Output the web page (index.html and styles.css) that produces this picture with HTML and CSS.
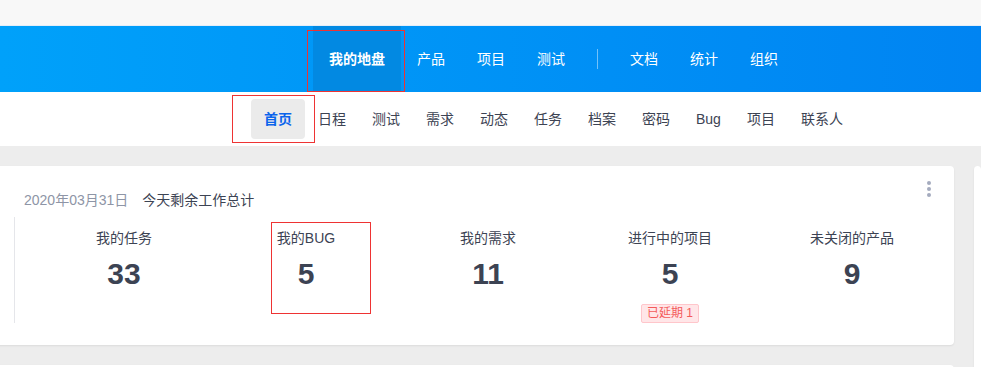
FILE: index.html
```html
<html><head>
<meta charset="UTF-8">
<meta name="viewport" content="width=device-width, initial-scale=1.0">
<title>我的地盘 - 首页</title>
<link rel="stylesheet" href="styles.css">
</head>
<body>
  <div class="topbar"></div>

  <nav class="mainnav">
    <a class="nav-item active marked" href="#">我的地盘</a>
    <a class="nav-item" href="#">产品</a>
    <a class="nav-item" href="#">项目</a>
    <a class="nav-item" href="#">测试</a>
    <span class="nav-divider"></span>
    <a class="nav-item" href="#">文档</a>
    <a class="nav-item" href="#">统计</a>
    <a class="nav-item" href="#">组织</a>
  </nav>

  <nav class="subnav">
    <a class="sub-item active marked" href="#">首页</a>
    <a class="sub-item" href="#">日程</a>
    <a class="sub-item" href="#">测试</a>
    <a class="sub-item" href="#">需求</a>
    <a class="sub-item" href="#">动态</a>
    <a class="sub-item" href="#">任务</a>
    <a class="sub-item" href="#">档案</a>
    <a class="sub-item" href="#">密码</a>
    <a class="sub-item" href="#">Bug</a>
    <a class="sub-item" href="#">项目</a>
    <a class="sub-item" href="#">联系人</a>
  </nav>

  <main class="dashboard">
    <div class="col-main">
      <div class="panel">
        <div class="panel-heading">
          <span class="panel-date">2020年03月31日</span>
          <span class="panel-title">今天剩余工作总计</span>
          <span class="panel-actions">
            <svg width="4" height="16" viewBox="0 0 4 16"><circle cx="2" cy="2" r="2"/><circle cx="2" cy="8" r="2"/><circle cx="2" cy="14" r="2"/></svg>
          </span>
        </div>
        <div class="stats">
          <div class="stat">
            <div class="stat-label">我的任务</div>
            <div class="stat-value">33</div>
          </div>
          <div class="stat marked">
            <div class="stat-label">我的BUG</div>
            <div class="stat-value">5</div>
          </div>
          <div class="stat">
            <div class="stat-label">我的需求</div>
            <div class="stat-value">11</div>
          </div>
          <div class="stat">
            <div class="stat-label">进行中的项目</div>
            <div class="stat-value">5</div>
            <span class="label-delay">已延期 1</span>
          </div>
          <div class="stat">
            <div class="stat-label">未关闭的产品</div>
            <div class="stat-value">9</div>
          </div>
        </div>
      </div>
      <div class="panel"></div>
    </div>
    <div class="col-side">
      <div class="panel tall"></div>
    </div>
  </main>
</body></html>
```

FILE: styles.css
```css
body {
  font-family: 'Liberation Sans', 'Noto Sans CJK SC', sans-serif;
  margin: 0;
  padding: 0;
  background-color: #ededed;
  color: #3c4353;
  font-size: 14px;
  overflow: hidden;
}
a {
  text-decoration: none;
}
.topbar {
  height: 25px;
  background-color: #f8f8f8;
  border-bottom: 1px solid #e4eef8;
}
.mainnav {
  display: flex;
  align-items: center;
  height: 66px;
  padding-left: 313px;
  background: linear-gradient(90deg, #00a1fa 0%, #0084f2 100%);
}
.nav-item {
  position: relative;
  height: 66px;
  line-height: 66px;
  padding: 0 16px;
  color: #fff;
}
.nav-item.active {
  font-weight: bold;
  background-color: #0289e2;
}
.nav-divider {
  width: 1px;
  height: 20px;
  margin: 0 16px;
  background-color: rgba(255,255,255,0.45);
}
.subnav {
  display: flex;
  align-items: center;
  height: 54px;
  padding-left: 251px;
  background-color: #fff;
}
.sub-item {
  position: relative;
  height: 40px;
  line-height: 40px;
  padding: 0 13px;
  border-radius: 4px;
  color: #3c4353;
}
.sub-item.active {
  background-color: #ebebeb;
  color: #0c64eb;
  font-weight: bold;
}
.dashboard {
  display: grid;
  grid-template-columns: 964px 1fr;
  gap: 20px;
  margin-left: -10px;
  padding-top: 20px;
}
.col-main {
  display: flex;
  flex-direction: column;
  gap: 20px;
}
.panel {
  background-color: #fff;
  border-radius: 4px;
  box-shadow: 0 1px 2px rgba(0,0,0,0.08);
  min-height: 60px;
}
.panel.tall {
  height: 400px;
}
.panel-heading {
  display: flex;
  align-items: flex-start;
  padding: 24px 0 0 34px;
  line-height: 20px;
}
.panel-date {
  color: #8e95a6;
  margin-right: 14px;
}
.panel-actions {
  margin: -9px 23px 0 auto;
  fill: #a4abbe;
  line-height: 0;
}
.stats {
  display: grid;
  grid-template-columns: repeat(5, 182px);
  margin: 7px 0 0 24px;
  padding: 0 0 0 18px;
  height: 106px;
  border-left: 1px solid #e5e6ea;
  margin-bottom: 22px;
}
.stat {
  position: relative;
  text-align: center;
}
.stat-label {
  margin-top: 11px;
  line-height: 20px;
}
.stat-value {
  margin-top: 8px;
  font-size: 30px;
  font-weight: bold;
  line-height: 36px;
}
.label-delay {
  display: inline-block;
  margin-top: 12px;
  padding: 0 5px;
  font-size: 12px;
  line-height: 17px;
  color: #f45a5a;
  background-color: #ffe6e8;
  border: 1px solid #ffc6cb;
  border-radius: 2px;
}

/* red review marks drawn over the screenshot */
.marked::after {
  content: '';
  position: absolute;
  border: 1px solid #ee3333;
  pointer-events: none;
}
.nav-item.marked::after {
  left: -6px;
  top: 4px;
  width: 96px;
  height: 60px;
}
.sub-item.marked::after {
  left: -19px;
  top: -4px;
  width: 81px;
  height: 46px;
}
.stat.marked::after {
  left: 56px;
  top: 5px;
  width: 98px;
  height: 90px;
}
```
